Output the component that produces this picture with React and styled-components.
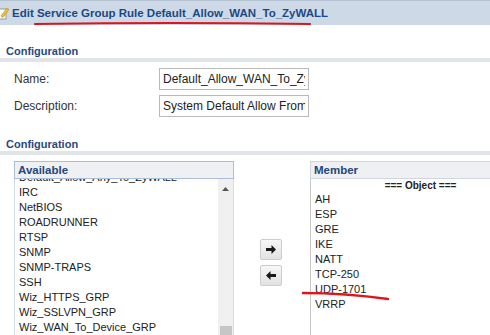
import React from 'react'
import styled, { createGlobalStyle } from 'styled-components'

const GlobalStyle = createGlobalStyle`
	html, body {
		margin: 0;
		padding: 0;
		background: #ffffff;
	}
	body {
		font-family: "Liberation Sans", Arial, sans-serif;
		color: #222;
	}
`

const Page = styled.div`
	position: relative;
	width: 490px;
	height: 335px;
	overflow: hidden;
	background: #fff;
`

const TitleBar = styled.div`
	display: flex;
	align-items: center;
	gap: 3px;
	height: 24px;
	border-top: 1px solid #b4c2d2;
	background: #cdd9e6;
	font-size: 11.5px;
	font-weight: bold;
	color: #1c4885;
	white-space: nowrap;
`

const SectionHeading = styled.div`
	margin-top: ${p => p.top}px;
	padding-left: 6px;
	height: 14px;
	line-height: 14px;
	font-size: 11px;
	font-weight: bold;
	color: #284a7e;
	border-bottom: 4px solid #e1e4e8;
`

const Form = styled.div`
	display: grid;
	grid-template-columns: 145px 150px;
	row-gap: 5px;
	padding: 6px 0 0 14px;
	align-items: center;
`

const Label = styled.div`
	font-size: 12px;
	color: #333;
`

const Field = styled.input`
	box-sizing: border-box;
	width: 150px;
	height: 22px;
	padding: 0 3px;
	border: 1px solid #b9b9b9;
	font-family: "Liberation Sans", Arial, sans-serif;
	font-size: 12px;
	color: #222;
	background: #fff;
	outline: none;
`

const Lists = styled.div`
	display: flex;
	align-items: flex-start;
	padding: 6px 0 0 14px;
`

const Box = styled.div`
	flex: none;
	box-sizing: border-box;
	width: 220px;
	height: 175px;
	display: flex;
	flex-direction: column;
`

const BoxHeader = styled.div`
	height: 18px;
	box-sizing: border-box;
	padding-left: 3px;
	line-height: 17px;
	border: 1px solid ${p => p.edge};
	background: #eef0f3;
	font-size: 11.5px;
	font-weight: bold;
	color: #24467c;
`

const AvailBody = styled.div`
	flex: 1;
	display: flex;
	overflow: hidden;
	border-left: 1px solid #d4dce4;
	border-right: 1px solid #d4dce4;
`

const ItemList = styled.div`
	flex: 1;
	overflow: hidden;
	padding-left: ${p => p.pad}px;
`

// list is scrolled down a little, so the first entry peeks out under the header
const Scrolled = styled.div`
	margin-top: -9.5px;
`

const Item = styled.div`
	height: 15px;
	line-height: 15px;
	font-size: 11px;
	color: #222;
	white-space: nowrap;
`

const ObjectRow = styled.div`
	height: 13px;
	line-height: 13px;
	text-align: center;
	font-size: 10px;
	font-weight: bold;
	color: #222;
`

const ScrollTrack = styled.div`
	width: 15px;
	display: flex;
	flex-direction: column;
	justify-content: space-between;
	align-items: center;
	background: #f0f0f0;
	padding-top: 8px;
`

const Thumb = styled.div`
	width: 12px;
	height: 10px;
	background: #c6c6c6;
`

const Buttons = styled.div`
	flex: none;
	width: 76px;
	display: flex;
	flex-direction: column;
	gap: 5px;
	padding: 78px 0 0 26px;
	box-sizing: border-box;
`

const MoveButton = styled.div`
	width: 22px;
	height: 21px;
	box-sizing: border-box;
	display: flex;
	align-items: center;
	justify-content: center;
	border: 1px solid #cccccc;
	border-radius: 2px;
	background: linear-gradient(#f7f7f7, #e2e2e2);
`

const MemberBody = styled.div`
	flex: 1;
	border-left: 1px solid #c9c9c9;
	overflow: hidden;
`

const Marks = styled.svg`
	position: absolute;
	left: 0;
	top: 0;
	pointer-events: none;
`

const available = [
	'Default_Allow_Any_To_ZyWALL',
	'IRC',
	'NetBIOS',
	'ROADRUNNER',
	'RTSP',
	'SNMP',
	'SNMP-TRAPS',
	'SSH',
	'Wiz_HTTPS_GRP',
	'Wiz_SSLVPN_GRP',
	'Wiz_WAN_To_Device_GRP'
]

const members = ['AH', 'ESP', 'GRE', 'IKE', 'NATT', 'TCP-250', 'UDP-1701', 'VRRP']

const EditIcon = () =>
	<svg width="9" height="14" viewBox="0 0 9 14">
		<rect x="-3" y="3" width="9" height="10" fill="#fff" stroke="#9a9a9a" />
		<path d="M1 10 L7 2 L9 3.5 L3 11.5 Z" fill="#f2c230" stroke="#b08a10" strokeWidth="0.6" />
	</svg>

const Arrow = ({ left }) =>
	<svg width="10" height="9" viewBox="0 0 10 9">
		<path
			d={left ? 'M0 4.5 L4.5 0 L4.5 3 L10 3 L10 6 L4.5 6 L4.5 9 Z' : 'M10 4.5 L5.5 0 L5.5 3 L0 3 L0 6 L5.5 6 L5.5 9 Z'}
			fill="#1a1a1a"
		/>
	</svg>

const App = () => {
	return (
		<Page>
			<GlobalStyle />
			<TitleBar>
				<EditIcon />
				<span>Edit Service Group Rule Default_Allow_WAN_To_ZyWALL</span>
			</TitleBar>

			<SectionHeading top={19}>Configuration</SectionHeading>
			<Form>
				<Label>Name:</Label>
				<Field readOnly value="Default_Allow_WAN_To_ZyWALL" />
				<Label>Description:</Label>
				<Field readOnly value="System Default Allow From WAN To ZyWALL" />
			</Form>

			<SectionHeading top={20}>Configuration</SectionHeading>
			<Lists>
				<Box>
					<BoxHeader edge="#a9bfd8">Available</BoxHeader>
					<AvailBody>
						<ItemList pad={4}>
							<Scrolled>
								{ available.map(name => <Item key={name}>{ name }</Item>) }
							</Scrolled>
						</ItemList>
						<ScrollTrack>
							<svg width="7" height="4" viewBox="0 0 7 4">
								<path d="M0 4 L3.5 0 L7 4 Z" fill="#555" />
							</svg>
							<Thumb />
						</ScrollTrack>
					</AvailBody>
				</Box>

				<Buttons>
					<MoveButton><Arrow /></MoveButton>
					<MoveButton><Arrow left /></MoveButton>
				</Buttons>

				<Box>
					<BoxHeader edge="#cfd6de">Member</BoxHeader>
					<MemberBody>
						<ObjectRow>=== Object ===</ObjectRow>
						<ItemList pad={4}>
							{ members.map(name => <Item key={name}>{ name }</Item>) }
						</ItemList>
					</MemberBody>
				</Box>
			</Lists>

			<Marks width="490" height="335">
				<path d="M35 24 Q170 22 310 24" stroke="#e0141c" strokeWidth="2.2" fill="none" strokeLinecap="round" />
				<path d="M303 293 Q345 293 388 299" stroke="#e0141c" strokeWidth="2.4" fill="none" strokeLinecap="round" />
			</Marks>
		</Page>
	)
}

export default App
